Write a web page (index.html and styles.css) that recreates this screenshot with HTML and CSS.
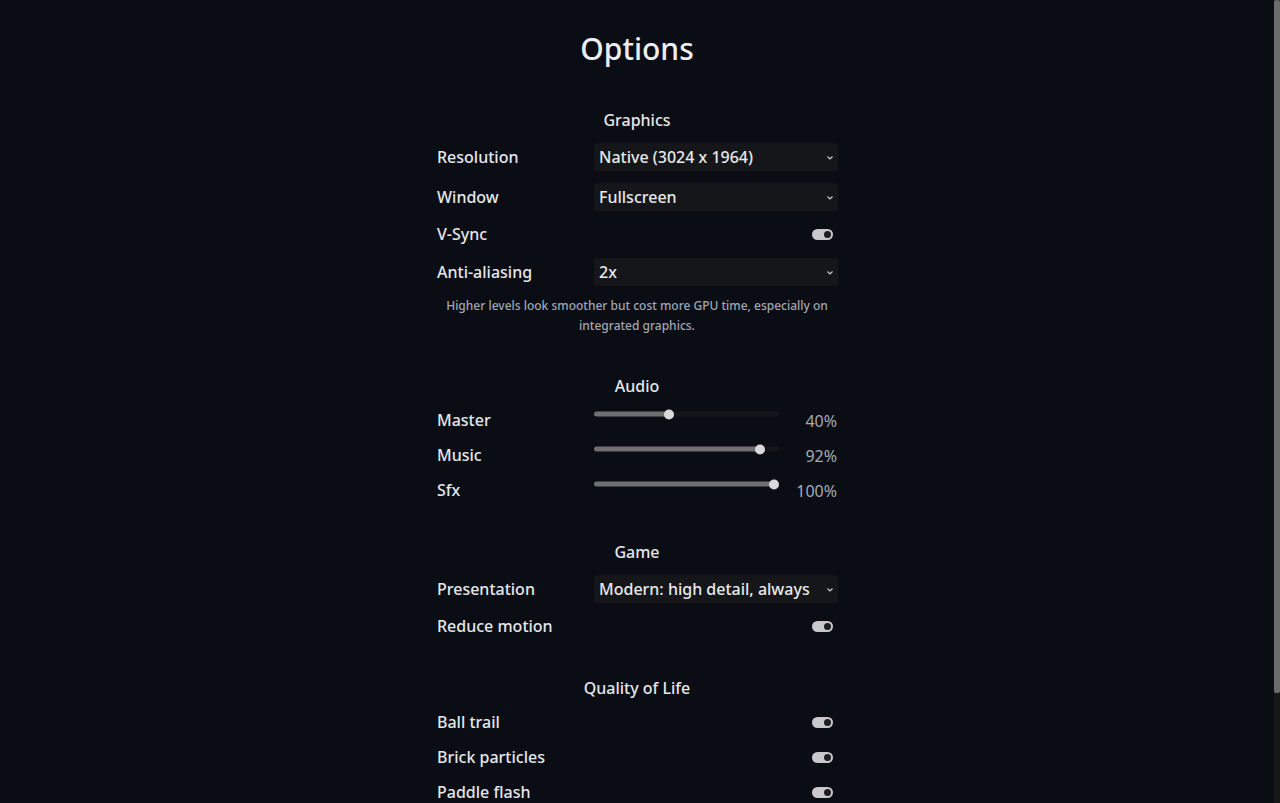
FILE: index.html
```html
<!DOCTYPE html>
<html lang="en">
<head>
<meta charset="utf-8">
<title>Options</title>
<link rel="stylesheet" href="styles.css">
</head>
<body>
<main class="options">
  <h1 class="title">Options</h1>

  <section class="section">
    <h2 class="section-title">Graphics</h2>
    <div class="row">
      <span class="label">Resolution</span>
      <div class="select"><span>Native (3024 x 1964)</span><svg class="chev" viewBox="0 0 6 4" width="6" height="4"><path d="M0.5 0.5 L3 3 L5.5 0.5" fill="none" stroke="#c8c8c8" stroke-width="1.2"/></svg></div>
    </div>
    <div class="row">
      <span class="label">Window</span>
      <div class="select"><span>Fullscreen</span><svg class="chev" viewBox="0 0 6 4" width="6" height="4"><path d="M0.5 0.5 L3 3 L5.5 0.5" fill="none" stroke="#c8c8c8" stroke-width="1.2"/></svg></div>
    </div>
    <div class="row">
      <span class="label">V-Sync</span>
      <span class="toggle"><span class="knob"></span></span>
    </div>
    <div class="row">
      <span class="label">Anti-aliasing</span>
      <div class="select"><span>2x</span><svg class="chev" viewBox="0 0 6 4" width="6" height="4"><path d="M0.5 0.5 L3 3 L5.5 0.5" fill="none" stroke="#c8c8c8" stroke-width="1.2"/></svg></div>
    </div>
    <p class="help">Higher levels look smoother but cost more GPU time, especially on integrated graphics.</p>
  </section>

  <section class="section">
    <h2 class="section-title">Audio</h2>
    <div class="row">
      <span class="label">Master</span>
      <div class="slider-wrap">
        <div class="slider"><div class="fill" style="width: calc(5px + 40% * 175 / 185)"></div><div class="thumb" style="left: calc(40% * 175 / 185)"></div></div>
        <span class="value">40%</span>
      </div>
    </div>
    <div class="row">
      <span class="label">Music</span>
      <div class="slider-wrap">
        <div class="slider"><div class="fill" style="width: calc(5px + 92% * 175 / 185)"></div><div class="thumb" style="left: calc(92% * 175 / 185)"></div></div>
        <span class="value">92%</span>
      </div>
    </div>
    <div class="row">
      <span class="label">Sfx</span>
      <div class="slider-wrap">
        <div class="slider"><div class="fill" style="width: calc(5px + 100% * 175 / 185)"></div><div class="thumb" style="left: calc(100% * 175 / 185)"></div></div>
        <span class="value">100%</span>
      </div>
    </div>
  </section>

  <section class="section">
    <h2 class="section-title">Game</h2>
    <div class="row">
      <span class="label">Presentation</span>
      <div class="select"><span>Modern: high detail, always</span><svg class="chev" viewBox="0 0 6 4" width="6" height="4"><path d="M0.5 0.5 L3 3 L5.5 0.5" fill="none" stroke="#c8c8c8" stroke-width="1.2"/></svg></div>
    </div>
    <div class="row">
      <span class="label">Reduce motion</span>
      <span class="toggle"><span class="knob"></span></span>
    </div>
  </section>

  <section class="section">
    <h2 class="section-title">Quality of Life</h2>
    <div class="row">
      <span class="label">Ball trail</span>
      <span class="toggle"><span class="knob"></span></span>
    </div>
    <div class="row">
      <span class="label">Brick particles</span>
      <span class="toggle"><span class="knob"></span></span>
    </div>
    <div class="row">
      <span class="label">Paddle flash</span>
      <span class="toggle"><span class="knob"></span></span>
    </div>
  </section>
</main>
<div class="scrollbar" aria-hidden="true"><div class="scroll-thumb"></div></div>
</body>
</html>
```

FILE: styles.css
```css
html {
  background: #0a0d14;
}
body {
  margin: 0;
  padding-right: 6px;
  background: #0a0d14;
  color: #e6e7eb;
  font-family: "Noto Sans", "Open Sans", sans-serif;
  font-weight: 500;
}
.options {
  width: 400px;
  margin: 0 auto;
  padding: 28px 0 120px;
  display: flex;
  flex-direction: column;
  gap: 39px;
}
.title {
  margin: 0;
  font-size: 30px;
  line-height: 42px;
  font-weight: 500;
  text-align: center;
  color: #eceef2;
}
.section {
  display: flex;
  flex-direction: column;
  gap: 12px;
}
.section-title {
  margin: 0;
  font-size: 16px;
  line-height: 22px;
  font-weight: 500;
  text-align: center;
}
.row {
  display: grid;
  grid-template-columns: 157px 1fr;
  align-items: center;
  min-height: 23px;
}
.label {
  font-size: 16px;
  line-height: 23px;
}
.select {
  height: 28px;
  width: 244px;
  box-sizing: border-box;
  background: #151619;
  border-radius: 3px;
  display: flex;
  align-items: center;
  justify-content: space-between;
  padding: 0 5px;
  font-size: 16px;
  color: #e8e9ec;
}
.chev {
  display: block;
  margin-top: 1px;
}
.toggle {
  justify-self: end;
  margin-right: 4px;
  width: 21px;
  height: 11px;
  border-radius: 6px;
  background: #c9c9cb;
  display: flex;
  align-items: center;
  justify-content: flex-end;
  padding: 0 2px;
  box-sizing: border-box;
}
.knob {
  width: 7px;
  height: 7px;
  border-radius: 50%;
  background: #1d1e21;
}
.help {
  margin: -2px 0 0;
  font-size: 12px;
  line-height: 20px;
  text-align: center;
  color: #a3a7b2;
  font-weight: 500;
}
.slider-wrap {
  display: flex;
  align-items: center;
  height: 23px;
}
.slider {
  position: relative;
  width: 185px;
  height: 5px;
  border-radius: 3px;
  background: #15161a;
  transform: translateY(-6.5px);
}
.fill {
  height: 5px;
  border-radius: 3px;
  background: #6f6f71;
}
.thumb {
  position: absolute;
  top: -2.5px;
  width: 10px;
  height: 10px;
  border-radius: 50%;
  background: #d9d9db;
}
.value {
  flex: 1;
  text-align: right;
  font-size: 16px;
  line-height: 23px;
  color: #a6aab5;
  font-weight: 400;
  transform: translateY(1px);
}
.scrollbar {
  position: fixed;
  top: 0;
  right: 0;
  bottom: 0;
  width: 6px;
  background: #171717;
}
.scroll-thumb {
  height: 693px;
  background: #6b6b6b;
  border-radius: 2px;
}
```
